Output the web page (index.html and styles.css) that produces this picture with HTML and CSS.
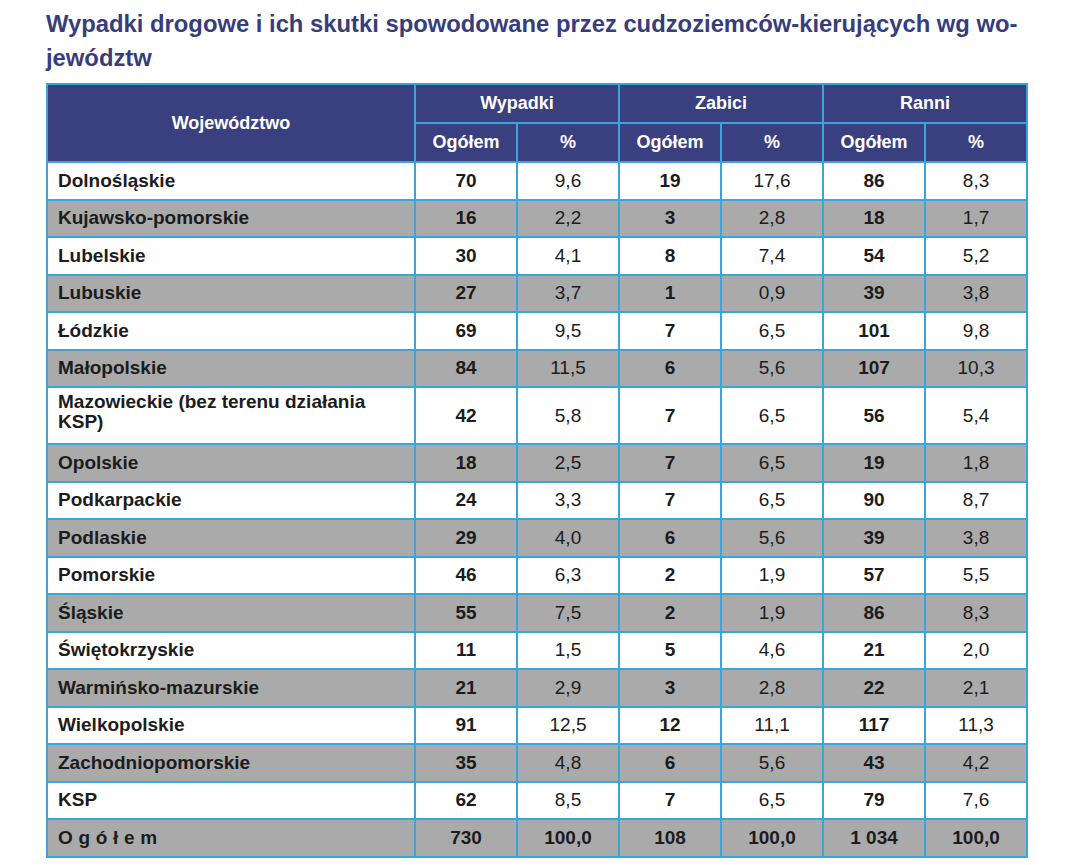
FILE: index.html
```html
<!DOCTYPE html>
<html lang="pl">
<head>
<meta charset="utf-8">
<title>Wypadki drogowe</title>
<link rel="stylesheet" href="styles.css">
</head>
<body>
<div class="page">
<h1 class="title">Wypadki drogowe i ich skutki spowodowane przez cudzoziemców-kierujących wg wo-<br>jewództw</h1>
<table class="data">
<colgroup>
<col class="c-name"><col class="c-num"><col class="c-num"><col class="c-num"><col class="c-num"><col class="c-num"><col class="c-num">
</colgroup>
<thead>
<tr class="h1"><th rowspan="2">Województwo</th><th colspan="2">Wypadki</th><th colspan="2">Zabici</th><th colspan="2">Ranni</th></tr>
<tr class="h2"><th>Ogółem</th><th>%</th><th>Ogółem</th><th>%</th><th>Ogółem</th><th>%</th></tr>
</thead>
<tbody>
<tr><td class="n">Dolnośląskie</td><td class="b">70</td><td>9,6</td><td class="b">19</td><td>17,6</td><td class="b">86</td><td>8,3</td></tr>
<tr class="g"><td class="n">Kujawsko-pomorskie</td><td class="b">16</td><td>2,2</td><td class="b">3</td><td>2,8</td><td class="b">18</td><td>1,7</td></tr>
<tr><td class="n">Lubelskie</td><td class="b">30</td><td>4,1</td><td class="b">8</td><td>7,4</td><td class="b">54</td><td>5,2</td></tr>
<tr class="g"><td class="n">Lubuskie</td><td class="b">27</td><td>3,7</td><td class="b">1</td><td>0,9</td><td class="b">39</td><td>3,8</td></tr>
<tr><td class="n">Łódzkie</td><td class="b">69</td><td>9,5</td><td class="b">7</td><td>6,5</td><td class="b">101</td><td>9,8</td></tr>
<tr class="g"><td class="n">Małopolskie</td><td class="b">84</td><td>11,5</td><td class="b">6</td><td>5,6</td><td class="b">107</td><td>10,3</td></tr>
<tr class="tall"><td class="n">Mazowieckie (bez terenu działania<br>KSP)</td><td class="b">42</td><td>5,8</td><td class="b">7</td><td>6,5</td><td class="b">56</td><td>5,4</td></tr>
<tr class="g"><td class="n">Opolskie</td><td class="b">18</td><td>2,5</td><td class="b">7</td><td>6,5</td><td class="b">19</td><td>1,8</td></tr>
<tr><td class="n">Podkarpackie</td><td class="b">24</td><td>3,3</td><td class="b">7</td><td>6,5</td><td class="b">90</td><td>8,7</td></tr>
<tr class="g"><td class="n">Podlaskie</td><td class="b">29</td><td>4,0</td><td class="b">6</td><td>5,6</td><td class="b">39</td><td>3,8</td></tr>
<tr><td class="n">Pomorskie</td><td class="b">46</td><td>6,3</td><td class="b">2</td><td>1,9</td><td class="b">57</td><td>5,5</td></tr>
<tr class="g"><td class="n">Śląskie</td><td class="b">55</td><td>7,5</td><td class="b">2</td><td>1,9</td><td class="b">86</td><td>8,3</td></tr>
<tr><td class="n">Świętokrzyskie</td><td class="b">11</td><td>1,5</td><td class="b">5</td><td>4,6</td><td class="b">21</td><td>2,0</td></tr>
<tr class="g"><td class="n">Warmińsko-mazurskie</td><td class="b">21</td><td>2,9</td><td class="b">3</td><td>2,8</td><td class="b">22</td><td>2,1</td></tr>
<tr><td class="n">Wielkopolskie</td><td class="b">91</td><td>12,5</td><td class="b">12</td><td>11,1</td><td class="b">117</td><td>11,3</td></tr>
<tr class="g"><td class="n">Zachodniopomorskie</td><td class="b">35</td><td>4,8</td><td class="b">6</td><td>5,6</td><td class="b">43</td><td>4,2</td></tr>
<tr><td class="n">KSP</td><td class="b">62</td><td>8,5</td><td class="b">7</td><td>6,5</td><td class="b">79</td><td>7,6</td></tr>
<tr class="g total"><td class="n spaced">Ogółem</td><td class="b">730</td><td class="b">100,0</td><td class="b">108</td><td class="b">100,0</td><td class="b">1 034</td><td class="b">100,0</td></tr>
</tbody>
</table>
</div>
</body>
</html>
```

FILE: styles.css
```css
html, body {
  margin: 0;
  padding: 0;
  background: #ffffff;
}

.page {
  padding: 7px 0 0 46px;
  font-family: "Liberation Sans", Arial, sans-serif;
}

.title {
  margin: 0 0 8px 0;
  font-size: 23.8px;
  line-height: 34px;
  font-weight: bold;
  color: #373d7c;
}

.data {
  border-collapse: collapse;
  width: 982px;
  table-layout: fixed;
  border: 2px solid #38a6da;
}

.c-name { width: 368px; }
.c-num { width: 102px; }

.data th,
.data td {
  border: 2px solid #38a6da;
  padding: 0;
  font-size: 19px;
  text-align: center;
  vertical-align: middle;
}

.data th {
  background: #3a3f80;
  color: #ffffff;
  font-weight: bold;
  font-size: 18px;
}

.h1, .h2 { height: 39px; }

.data td {
  color: #1c1c1c;
  background: #ffffff;
  line-height: 20px;
}

.data tbody tr { height: 37.5px; }
.data tbody tr.tall { height: 57px; }
.data tbody tr.tall td.n { padding-bottom: 8px; }

.data tr.g td { background: #aaaaaa; }

.data td.n {
  text-align: left;
  padding-left: 10px;
  font-weight: bold;
}

.data td.b { font-weight: bold; }

.data td.spaced { letter-spacing: 0.3em; }
```
